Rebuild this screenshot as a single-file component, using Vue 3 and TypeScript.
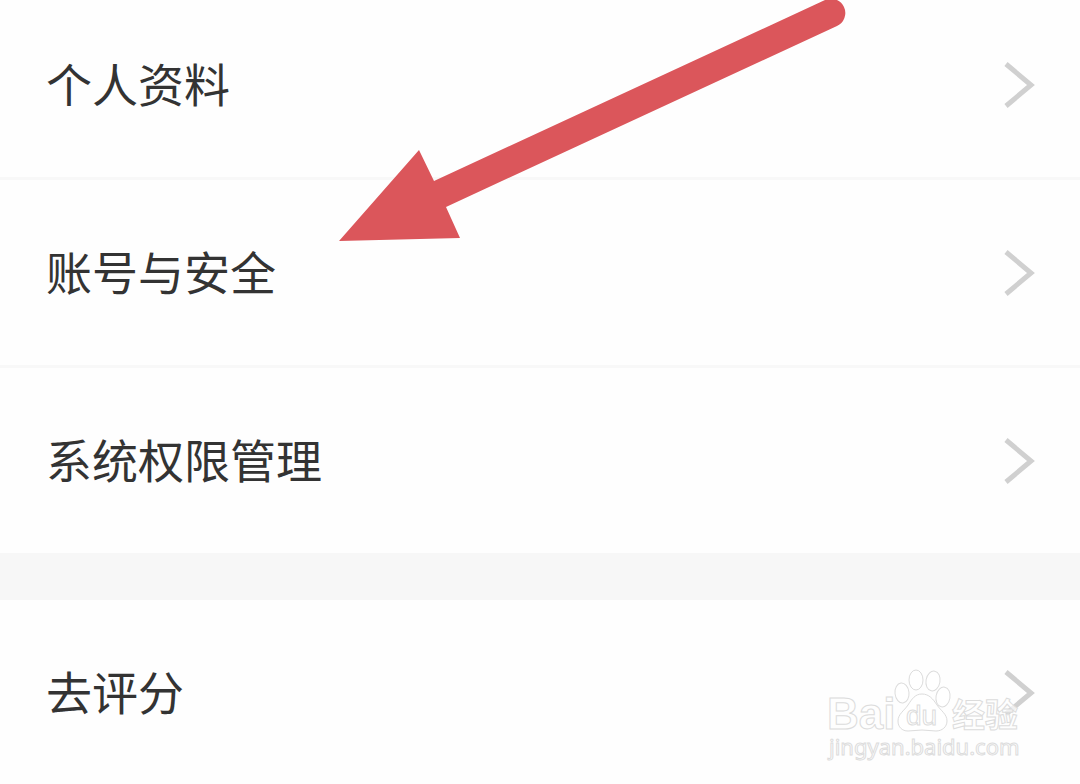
<script setup lang="ts">
interface Item {
  id: string
  label: string
}

const groups: Item[][] = [
  [
    { id: 'profile', label: '个人资料' },
    { id: 'security', label: '账号与安全' },
    { id: 'permissions', label: '系统权限管理' },
  ],
  [{ id: 'rate', label: '去评分' }],
]
</script>

<template>
  <main class="page">
    <nav class="groups">
      <ul v-for="(group, index) in groups" :key="index" class="group">
        <li v-for="item in group" :key="item.id" class="item">
          <button type="button" class="row">
            <span class="label">{{ item.label }}</span>
            <svg class="chevron" viewBox="0 0 32 48" aria-hidden="true">
              <path d="M3 3 L28 24 L3 45" />
            </svg>
          </button>
        </li>
      </ul>
    </nav>

    <svg class="arrow" viewBox="0 0 520 250" aria-hidden="true">
      <path d="M9 241 L89 150 L104 181 L495 0 A14 14 0 0 1 507 26 L116 207 L130 238 Z" />
    </svg>

    <svg class="watermark" viewBox="0 0 210 104" role="img" aria-label="Baidu 经验">
      <g class="mark">
        <text class="brand" x="7" y="58">Bai</text>
        <ellipse cx="82" cy="22" rx="7" ry="10" transform="rotate(-6 82 22)" />
        <ellipse cx="96" cy="9" rx="7" ry="10" />
        <ellipse cx="113" cy="10" rx="7" ry="10" transform="rotate(10 113 10)" />
        <ellipse cx="123" cy="26" rx="7" ry="10" transform="rotate(10 123 26)" />
        <path
          d="M102 23 C95 23 92 28 88 34 C84 40 78 43 78 50 C78 56 82 60 88 60 C93 60 97 59 102 59 C107 59 111 60 116 60 C122 60 127 56 127 50 C127 43 121 40 117 34 C113 28 109 23 102 23 Z"
        />
        <text class="du" x="86" y="54">du</text>
        <text class="cjk" x="132" y="56">经验</text>
        <text class="site" x="9" y="84">jingyan.baidu.com</text>
      </g>
    </svg>
  </main>
</template>

<style>
body {
  margin: 0;
  background: #fefefe;
}
</style>

<style scoped>
.page {
  position: relative;
  min-height: 100vh;
  overflow: hidden;
  background: #fefefe;
}

.groups {
  display: flex;
  flex-direction: column;
  gap: 47px;
  margin-top: -8px;
  background: #f7f7f7;
}

.group {
  margin: 0;
  padding: 0;
  list-style: none;
  background: #fefefe;
}

.item + .item {
  border-top: 3px solid #f8f8f8;
}

.row {
  display: flex;
  align-items: center;
  justify-content: space-between;
  box-sizing: border-box;
  width: 100%;
  padding: 60px 45px 60px 46px;
  border: 0;
  background: transparent;
  color: #333;
  font-family: "Noto Sans CJK SC", sans-serif;
  font-size: 46px;
  line-height: 61px;
  text-align: left;
  cursor: pointer;
}

.label {
  padding-bottom: 4px;
}

.chevron {
  flex: none;
  width: 32px;
  height: 48px;
}

.chevron path {
  fill: none;
  stroke: #d0d0d0;
  stroke-width: 5;
}

.arrow {
  position: absolute;
  top: 0;
  left: 330px;
  width: 520px;
  height: 250px;
  fill: #db565b;
  pointer-events: none;
}

.watermark {
  position: absolute;
  right: 50px;
  bottom: 10px;
  width: 210px;
  height: 104px;
  overflow: visible;
  pointer-events: none;
}

.mark {
  fill: #fff;
  fill-opacity: 0.7;
  stroke: #dcdcdc;
  stroke-width: 1;
  font-family: "Liberation Sans", "Noto Sans CJK SC", sans-serif;
}

.brand {
  font-size: 44px;
  font-weight: 700;
}

.du {
  font-size: 28px;
}

.cjk {
  font-family: "Noto Sans CJK SC", sans-serif;
  font-size: 33px;
  font-weight: 700;
}

.site {
  font-family: "Noto Sans", sans-serif;
  font-size: 22px;
}
</style>
